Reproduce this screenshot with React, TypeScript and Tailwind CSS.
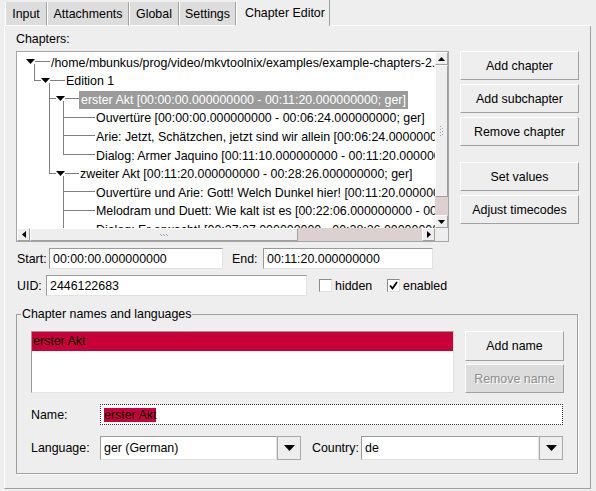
import React from "react";

const raised =
  "bg-[#eeeeee] border border-t-white border-l-white border-b-[#a0a0a0] border-r-[#a0a0a0]";
const sunken =
  "bg-white border border-t-[#9a9a9a] border-l-[#9a9a9a] border-b-[#e2e2e2] border-r-[#e2e2e2]";

function Arrow({ dir }: { dir: "up" | "down" | "left" | "right" }) {
  const pts: Record<string, string> = {
    up: "0,4 7,4 3.5,0",
    down: "0,0 7,0 3.5,4",
    left: "4,0 4,7 0,3.5",
    right: "0,0 0,7 4,3.5",
  };
  const vertical = dir === "up" || dir === "down";
  return (
    <svg width={vertical ? 7 : 4} height={vertical ? 4 : 7} viewBox={vertical ? "0 0 7 4" : "0 0 4 7"}>
      <polygon points={pts[dir]} fill="#000" />
    </svg>
  );
}

function ArrowBtn({ dir }: { dir: "up" | "down" | "left" | "right" }) {
  return (
    <div className={`${raised} w-[13px] h-[13px] flex items-center justify-center shrink-0`}>
      <Arrow dir={dir} />
    </div>
  );
}

function Button({
  label,
  className,
  disabled,
}: {
  label: string;
  className: string;
  disabled?: boolean;
}) {
  return (
    <div
      className={`${
        disabled
          ? "bg-[#dcdcdc] border border-t-white border-l-white border-b-[#a0a0a0] border-r-[#a0a0a0] text-[#8c8c8c] [text-shadow:1px_1px_0_#ffffff]"
          : raised + " text-black"
      } flex items-center justify-center whitespace-nowrap ${className}`}
    >
      {label}
    </div>
  );
}

function Checkbox({ checked }: { checked?: boolean }) {
  return (
    <div className="w-[13px] h-[13px] bg-white border border-t-[#8a8a8a] border-l-[#8a8a8a] border-b-[#e0e0e0] border-r-[#e0e0e0] flex items-center justify-center">
      {checked && (
        <svg width="9" height="9" viewBox="0 0 9 9">
          <path d="M1 4.5 L3.5 7.5 L8 1" stroke="#000" strokeWidth="1.8" fill="none" />
        </svg>
      )}
    </div>
  );
}

function Combo({ value, className }: { value: string; className: string }) {
  return (
    <div className={`flex h-[24px] ${className}`}>
      <div className={`${sunken} flex-1 flex items-center pl-[3px]`}>{value}</div>
      <div className="w-[24px] h-[24px] bg-[#eeeeee] border border-[#a8a8a8] flex items-center justify-center">
        <svg width="11" height="6" viewBox="0 0 11 6">
          <polygon points="0,0 11,0 5.5,6" fill="#000" />
        </svg>
      </div>
    </div>
  );
}

const rows: { text: string; pl: string; sel?: boolean }[] = [
  { text: "/home/mbunkus/prog/video/mkvtoolnix/examples/example-chapters-2.xml", pl: "pl-[34px]" },
  { text: "Edition 1", pl: "pl-[49px]" },
  { text: "erster Akt [00:00:00.000000000 - 00:11:20.000000000; ger]", pl: "pl-[62px]", sel: true },
  { text: "Ouvertüre [00:00:00.000000000 - 00:06:24.000000000; ger]", pl: "pl-[79px]" },
  { text: "Arie: Jetzt, Schätzchen, jetzt sind wir allein [00:06:24.000000000 - 00:11:10.000000000; ger]", pl: "pl-[79px]" },
  { text: "Dialog: Armer Jaquino [00:11:10.000000000 - 00:11:20.000000000; ger]", pl: "pl-[79px]" },
  { text: "zweiter Akt [00:11:20.000000000 - 00:28:26.000000000; ger]", pl: "pl-[63px]" },
  { text: "Ouvertüre und Arie: Gott! Welch Dunkel hier! [00:11:20.000000000 - 00:22:06.000000000; ger]", pl: "pl-[79px]" },
  { text: "Melodram und Duett: Wie kalt ist es [00:22:06.000000000 - 00:27:27.000000000; ger]", pl: "pl-[79px]" },
  { text: "Dialog: Er erwacht! [00:27:27.000000000 - 00:28:26.000000000; ger]", pl: "pl-[79px]" },
];

function tri(x0: number, ly: number) {
  return `${x0},${ly - 2.5} ${x0 + 9},${ly - 2.5} ${x0 + 4.5},${ly + 2.5}`;
}

function TreeLines() {
  const g = "#808080";
  const d = [
    "M35 62.5 H50",
    "M34.5 65 V81.5",
    "M34.5 81.5 H41",
    "M50 81.5 H65",
    "M49.5 84 V174.5",
    "M49.5 99.5 H56",
    "M65 99.5 H79",
    "M49.5 174.5 H56",
    "M65 174.5 H79",
    "M63.5 102 V155.5",
    "M63.5 118.5 H95",
    "M63.5 136.5 H95",
    "M63.5 155.5 H95",
    "M63.5 177 V240",
    "M63.5 192.5 H95",
    "M63.5 211.5 H95",
    "M63.5 229.5 H95",
  ].join(" ");
  return (
    <svg
      className="absolute left-0 top-0"
      width="418"
      height="176"
      viewBox="17 53 418 176"
    >
      <path d={d} stroke={g} strokeWidth="1" fill="none" shapeRendering="crispEdges" />
      <polygon points={tri(26, 62.5)} fill="#000" />
      <polygon points={tri(41, 81.5)} fill="#000" />
      <polygon points={tri(56, 99.5)} fill="#000" />
      <polygon points={tri(56, 174.5)} fill="#000" />
    </svg>
  );
}

export default function App() {
  return (
    <div className="w-[596px] h-[491px] bg-[#eeeeee] overflow-hidden font-['Liberation_Sans',Arial,sans-serif] text-[12.4px] text-black leading-[14px]">
      <div className="ml-[4px] w-[587px] flex flex-col">
        {/* Tabs */}
        <div className="flex items-end h-[26px]">
          <div className="w-[1px] h-[24px] border-b border-b-white" />
          {[
            ["Input", "w-[42px]"],
            ["Attachments", "w-[82px]"],
            ["Global", "w-[50px]"],
            ["Settings", "w-[57px]"],
          ].map(([t, w]) => (
            <div
              key={t}
              className={`${w} h-[24px] bg-[#dddddd] border-l border-l-white border-r border-r-[#a0a0a0] border-b border-b-white flex items-center justify-center whitespace-nowrap`}
            >
              {t}
            </div>
          ))}
          <div className="w-[94px] h-[26px] bg-[#eeeeee] border-l border-l-white border-r border-r-[#a0a0a0] flex items-center pl-[8px] pb-[1px] whitespace-nowrap">
            Chapter Editor
          </div>
          <div className="flex-1 h-[1px] bg-white" />
        </div>

        {/* Panel */}
        <div className="h-[463px] border-l border-l-white border-r border-r-[#a0a0a0] border-b border-b-[#a0a0a0] flex flex-col pl-[11px] pt-[6px]">
          <div className="h-[14px]">Chapters:</div>

          <div className="flex mt-[5px]">
            {/* Tree box */}
            <div className="w-[433px] h-[191px] border border-[#a5a5a5] flex flex-col">
              <div className="flex h-[176px]">
                <div className="relative w-[418px] h-[176px] bg-white overflow-hidden">
                  <TreeLines />
                  <div className="relative pt-[1.7px]">
                    {rows.map((r, i) => (
                      <div
                        key={i}
                        className={`h-[18.6px] leading-[18.6px] whitespace-nowrap ${r.pl}`}
                      >
                        {r.sel ? (
                          <span className="inline-block bg-[#9b9b9b] text-white px-[2px] h-[18.6px]">
                            {r.text}
                          </span>
                        ) : (
                          r.text
                        )}
                      </div>
                    ))}
                  </div>
                </div>
                {/* vertical scrollbar */}
                <div className="w-[13px] flex flex-col">
                  <ArrowBtn dir="up" />
                  <div className={`${raised} h-[132px] flex items-center justify-center`}>
                    <svg width="3" height="11" viewBox="0 0 3 11">
                      {[0, 3, 6, 9].map((y) => (
                        <rect key={y} x="0" y={y} width="1" height="1" fill="#a0a0a0" />
                      ))}
                      {[2, 5, 8].map((y) => (
                        <rect key={y} x="2" y={y} width="1" height="1" fill="#a0a0a0" />
                      ))}
                    </svg>
                  </div>
                  <div className="flex-1 bg-[#ddd0d0]" />
                  <ArrowBtn dir="down" />
                </div>
              </div>
              <div className="flex h-[13px]">
                <div className="w-[418px] flex">
                  <ArrowBtn dir="left" />
                  <div className={`${raised} w-[268px] flex items-center justify-center`}>
                    <svg width="9" height="2" viewBox="0 0 9 2">
                      {[0, 3, 6].map((x) => (
                        <rect key={x} x={x} y="0" width="1" height="1" fill="#a0a0a0" />
                      ))}
                      {[1, 4, 7].map((x) => (
                        <rect key={x} x={x} y="1" width="1" height="1" fill="#a0a0a0" />
                      ))}
                    </svg>
                  </div>
                  <div className="flex-1 bg-[#ddd0d0]" />
                  <ArrowBtn dir="right" />
                </div>
                <div className="flex-1 bg-[#eeeeee]" />
              </div>
            </div>

            {/* Right buttons */}
            <div className="ml-[11px] w-[119px] flex flex-col">
              <Button label="Add chapter" className="h-[29px]" />
              <Button label="Add subchapter" className="h-[29px] mt-[4px]" />
              <Button label="Remove chapter" className="h-[29px] mt-[4px]" />
              <Button label="Set values" className="h-[29px] mt-[16px]" />
              <Button label="Adjust timecodes" className="h-[29px] mt-[4px]" />
            </div>
          </div>

          {/* Start / End */}
          <div className="flex items-center h-[21px] mt-[6px]">
            <div className="w-[33px] pl-[1px]">Start:</div>
            <div className={`${sunken} w-[174px] h-[21px] flex items-center pl-[3px]`}>
              00:00:00.000000000
            </div>
            <div className="ml-[9px] w-[31px]">End:</div>
            <div className={`${sunken} w-[170px] h-[21px] flex items-center pl-[3px]`}>
              00:11:20.000000000
            </div>
          </div>

          {/* UID */}
          <div className="flex items-center h-[21px] mt-[6px]">
            <div className="w-[30px] pl-[1px]">UID:</div>
            <div className={`${sunken} w-[261px] h-[21px] flex items-center pl-[3px]`}>
              2446122683
            </div>
            <div className="ml-[12px] w-[68px] flex items-center">
              <Checkbox />
              <span className="ml-[3px]">hidden</span>
            </div>
            <div className="flex items-center">
              <Checkbox checked />
              <span className="ml-[3px]">enabled</span>
            </div>
          </div>

          {/* Group box */}
          <div className="relative mt-[18px] w-[562px] h-[160px] border border-[#a0a0a0] shadow-[1px_1px_0_#ffffff] pt-[16px] pl-[14px]">
            <span className="absolute -top-[8px] left-[4px] bg-[#eeeeee] px-[1px] leading-[14px] whitespace-nowrap">
              Chapter names and languages
            </span>
            <div className="flex">
              <div className={`${sunken} w-[423px] h-[62px]`}>
                <div className="h-[19px] bg-[#c8003a] leading-[19px] pl-[1px]">erster Akt</div>
              </div>
              <div className="ml-[11px] w-[99px] flex flex-col">
                <Button label="Add name" className="h-[30px]" />
                <Button label="Remove name" className="h-[29px] mt-[3px]" disabled />
              </div>
            </div>

            <div className="flex items-center mt-[11px] h-[21px]">
              <div className="w-[69px]">Name:</div>
              <div className="w-[463px] h-[21px] bg-white border border-dotted border-[#333333] flex items-center pl-[3px]">
                <span className="bg-[#c8003a] leading-[14px]">erster Akt</span>
              </div>
            </div>

            <div className="flex items-center mt-[11px] h-[24px]">
              <div className="w-[69px]">Language:</div>
              <Combo value="ger (German)" className="w-[201px]" />
              <div className="ml-[11px] w-[49px]">Country:</div>
              <Combo value="de" className="w-[202px]" />
            </div>
          </div>
        </div>
      </div>
    </div>
  );
}
